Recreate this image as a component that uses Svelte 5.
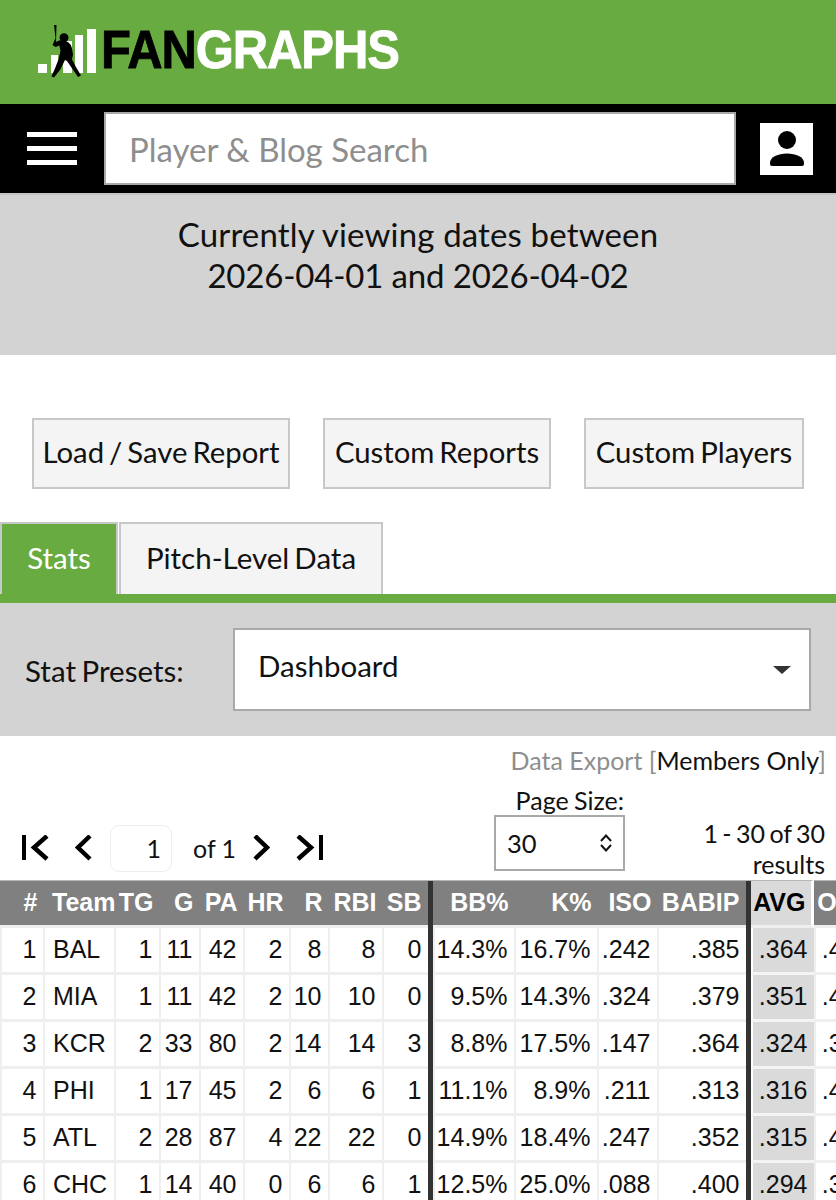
<script>
  const columns = [
    { key: 'n', label: '#', width: 43 },
    { key: 'team', label: 'Team', width: 71, left: true },
    { key: 'tg', label: 'TG', width: 45 },
    { key: 'g', label: 'G', width: 40 },
    { key: 'pa', label: 'PA', width: 44 },
    { key: 'hr', label: 'HR', width: 46 },
    { key: 'r', label: 'R', width: 39 },
    { key: 'rbi', label: 'RBI', width: 54 },
    { key: 'sb', label: 'SB', width: 51, divider: true },
    { key: 'bb', label: 'BB%', width: 81 },
    { key: 'k', label: 'K%', width: 83 },
    { key: 'iso', label: 'ISO', width: 60 },
    { key: 'babip', label: 'BABIP', width: 94, divider: true },
    { key: 'avg', label: 'AVG', width: 63, hl: true },
    { key: 'obp', label: 'OBP', width: 63 },
  ];

  const rows = [
    { n: 1, team: 'BAL', tg: 1, g: 11, pa: 42, hr: 2, r: 8, rbi: 8, sb: 0, bb: '14.3%', k: '16.7%', iso: '.242', babip: '.385', avg: '.364', obp: '.429' },
    { n: 2, team: 'MIA', tg: 1, g: 11, pa: 42, hr: 2, r: 10, rbi: 10, sb: 0, bb: '9.5%', k: '14.3%', iso: '.324', babip: '.379', avg: '.351', obp: '.429' },
    { n: 3, team: 'KCR', tg: 2, g: 33, pa: 80, hr: 2, r: 14, rbi: 14, sb: 3, bb: '8.8%', k: '17.5%', iso: '.147', babip: '.364', avg: '.324', obp: '.388' },
    { n: 4, team: 'PHI', tg: 1, g: 17, pa: 45, hr: 2, r: 6, rbi: 6, sb: 1, bb: '11.1%', k: '8.9%', iso: '.211', babip: '.313', avg: '.316', obp: '.400' },
    { n: 5, team: 'ATL', tg: 2, g: 28, pa: 87, hr: 4, r: 22, rbi: 22, sb: 0, bb: '14.9%', k: '18.4%', iso: '.247', babip: '.352', avg: '.315', obp: '.414' },
    { n: 6, team: 'CHC', tg: 1, g: 14, pa: 40, hr: 0, r: 6, rbi: 6, sb: 1, bb: '12.5%', k: '25.0%', iso: '.088', babip: '.400', avg: '.294', obp: '.375' },
  ];
</script>

<div class="page">
  <header class="brand">
    <a class="logo" href="#top" aria-label="FanGraphs">
      <svg class="mark" viewBox="0 0 60 56" width="60" height="56" aria-hidden="true">
        <g fill="#fff">
          <rect x="0" y="40" width="9" height="9" />
          <rect x="13" y="31" width="7" height="18" />
          <rect x="25" y="17" width="9" height="32" />
          <rect x="37" y="11" width="8" height="38" />
          <rect x="49" y="5" width="9" height="44" />
        </g>
        <path fill="#000" d="M16 1h2.500l-.5 17 3-1.500 1.500 0a4.500 4.500 0 1 1 6 1l2 1q3 2 3.500 6l1 6-1 5q4 8 9 16l-3 1.500-11-16-2-1-5 10-6 7.500-2.500-1q4-9 7-17l2-9q-1-3-1-5l-4 1.500-3-2 3-7z" />
      </svg>
      <span class="wordmark"><b>FAN</b>GRAPHS</span>
    </a>
  </header>

  <div class="searchbar">
    <button class="menu" aria-label="Menu"><span></span><span></span><span></span></button>
    <input class="search" placeholder="Player &amp; Blog Search" />
    <button class="user" aria-label="Account">
      <svg viewBox="0 0 36 36" width="36" height="36" aria-hidden="true">
        <circle cx="18" cy="9" r="9" fill="#000" />
        <path fill="#000" d="M1 33v-1c0-6 8-9.500 17-9.500s17 3.500 17 9.500v1q0 2-2 2H3q-2 0-2-2z" />
      </svg>
    </button>
  </div>

  <div class="dates">
    <p class="line-a">Currently viewing dates between</p>
    <p class="line-b">2026-04-01 and 2026-04-02</p>
  </div>

  <div class="reports">
    <button>Load / Save Report</button>
    <button>Custom Reports</button>
    <button>Custom Players</button>
  </div>

  <div class="tabs">
    <button class="tab active">Stats</button>
    <button class="tab">Pitch-Level Data</button>
  </div>

  <div class="presets">
    <span class="presets-label">Stat Presets:</span>
    <div class="select">
      <span>Dashboard</span>
      <i class="caret"></i>
    </div>
  </div>

  <div class="export"><span class="muted">Data Export [</span>Members Only<span class="muted">]</span></div>

  <div class="pager">
    <div class="nav">
      <svg viewBox="0 0 28 26" width="28" height="26" class="ico first" aria-hidden="true">
        <rect x="0" y="0" width="4" height="25" />
        <path d="M25 1 12 12.500 25 24" />
      </svg>
      <svg viewBox="0 0 18 26" width="18" height="26" class="ico prev" aria-hidden="true">
        <path d="M15 1 3 12.500 15 24" />
      </svg>
      <div class="page-input">1</div>
      <span class="of">of 1</span>
      <svg viewBox="0 0 18 26" width="18" height="26" class="ico next" aria-hidden="true">
        <path d="M3 1 15 12.500 3 24" />
      </svg>
      <svg viewBox="0 0 28 26" width="28" height="26" class="ico last" aria-hidden="true">
        <path d="M3 1 16 12.500 3 24" />
        <rect x="24" y="0" width="4" height="25" />
      </svg>
    </div>
    <div class="size">
      <label for="page-size">Page Size:</label>
      <div class="size-box" id="page-size">
        <span>30</span>
        <svg viewBox="0 0 14 20" width="14" height="20" aria-hidden="true">
          <path d="M2 8 7 2.500 12 8M2 12l5 5.500 5-5.500" />
        </svg>
      </div>
    </div>
    <div class="count">1 - 30 of 30<br />results</div>
  </div>

  <div class="table-wrap">
    <table>
      <colgroup>
        {#each columns as c}
          <col style="width: {c.width}px" />
        {/each}
      </colgroup>
      <thead>
        <tr>
          {#each columns as c}
            <th class:left={c.left} class:divider={c.divider} class:hl={c.hl}>{c.label}</th>
          {/each}
        </tr>
      </thead>
      <tbody>
        {#each rows as row}
          <tr>
            {#each columns as c}
              <td class:left={c.left} class:divider={c.divider} class:hl={c.hl}>{row[c.key]}</td>
            {/each}
          </tr>
        {/each}
      </tbody>
    </table>
  </div>
</div>

<style>
  :global(body) {
    margin: 0;
    background: #fff;
  }

  .page {
    width: 836px;
    height: 1200px;
    overflow: hidden;
    font-family: Lato, "Liberation Sans", sans-serif;
    color: #111;
  }

  button {
    font-family: inherit;
    color: inherit;
  }

  .brand {
    height: 104px;
    background: #68ac41;
    display: flex;
    align-items: flex-start;
  }

  .logo {
    display: flex;
    align-items: flex-start;
    margin: 24px 0 0 38px;
    text-decoration: none;
  }

  .mark {
    display: block;
    flex: none;
  }

  .wordmark {
    margin: 0 0 0 3px;
    font-family: "Liberation Sans", Arial, sans-serif;
    font-weight: 700;
    font-size: 53px;
    line-height: 52px;
    letter-spacing: -1.200px;
    color: #fff;
    -webkit-text-stroke: 0.800px currentColor;
    white-space: nowrap;
    transform: scaleX(0.925);
    transform-origin: left center;
  }

  .wordmark b {
    color: #000;
  }

  .searchbar {
    height: 89px;
    background: #000;
    display: flex;
    align-items: center;
    box-sizing: border-box;
  }

  .menu {
    width: 104px;
    height: 100%;
    background: none;
    border: 0;
    padding: 0 0 0 27px;
    display: flex;
    flex-direction: column;
    justify-content: center;
    gap: 9px;
    flex: none;
  }

  .menu span {
    display: block;
    width: 50px;
    height: 5px;
    background: #fff;
  }

  .search {
    width: 632px;
    height: 73px;
    box-sizing: border-box;
    border: 2px solid #a9a9a9;
    background: #fff;
    padding: 0 23px;
    font-family: inherit;
    font-size: 33px;
    flex: none;
  }

  .search::placeholder {
    color: #8e8e8e;
    opacity: 1;
  }

  .user {
    width: 53px;
    height: 52px;
    margin-left: 24px;
    padding: 0;
    border: 0;
    background: #fff;
    display: flex;
    align-items: center;
    justify-content: center;
    flex: none;
  }

  .dates {
    height: 162px;
    background: #d3d3d3;
    box-sizing: border-box;
    padding-top: 19px;
    text-align: center;
    font-size: 33px;
    line-height: 41px;
    border-top: 2px solid #c4c4c4;
  }

  .dates p {
    margin: 0;
  }

  .line-a { letter-spacing: 0.150px; }
  .line-b { letter-spacing: -0.170px; }

  .reports {
    display: flex;
    padding: 63px 0 0 32px;
    gap: 33px;
    height: 104px;
    box-sizing: content-box;
  }

  .reports button {
    height: 71px;
    padding: 0 0 4px;
    background: #f4f4f4;
    border: 2px solid #c8c8c8;
    font-size: 29.300px;
    word-spacing: -2.500px;
    white-space: nowrap;
  }

  .reports button:nth-child(1) { width: 258px; }
  .reports button:nth-child(2) { width: 228px; }
  .reports button:nth-child(3) { width: 220px; }

  .tabs {
    display: flex;
    height: 72px;
    gap: 1px;
  }

  .tab {
    height: 72px;
    padding: 0 0 4px;
    background: #f4f4f4;
    border: 2px solid #c8c8c8;
    border-bottom: 0;
    font-size: 29.500px;
    word-spacing: -2.500px;
    white-space: nowrap;
  }

  .tab:nth-child(1) { width: 118px; }
  .tab:nth-child(2) { width: 264px; }

  .tab.active {
    background: #68ac41;
    color: #fff;
  }

  .presets {
    height: 142px;
    box-sizing: border-box;
    background: #d3d3d3;
    border-top: 9px solid #68ac41;
    display: flex;
    align-items: center;
    padding: 0 25px;
  }

  .presets-label {
    width: 208px;
    font-size: 29.500px;
    word-spacing: -2px;
    flex: none;
    padding-top: 1px;
  }

  .select {
    width: 578px;
    height: 83px;
    box-sizing: border-box;
    background: #fff;
    border: 2px solid #a9a9a9;
    display: flex;
    align-items: center;
    justify-content: space-between;
    padding: 0 18px 9px 23px;
    font-size: 29.500px;
    flex: none;
  }

  .caret {
    width: 0;
    height: 0;
    border-left: 9px solid transparent;
    border-right: 9px solid transparent;
    border-top: 8px solid #333;
    margin-top: 9px;
  }

  .export {
    height: 49px;
    line-height: 49px;
    text-align: right;
    padding-right: 10px;
    font-size: 25px;
    color: #111;
  }

  .muted {
    color: #8e8e8e;
  }

  .pager {
    height: 95px;
    display: flex;
    font-size: 25px;
  }

  .nav {
    display: flex;
    align-items: center;
    height: 48px;
    margin: 39px 0 0 22px;
    flex: none;
  }

  .ico {
    display: block;
    flex: none;
    fill: none;
    stroke: #000;
    stroke-width: 4.500;
  }

  .ico rect {
    fill: #000;
    stroke: none;
  }

  .prev { margin-left: 25px; }

  .page-input {
    width: 62px;
    height: 47px;
    box-sizing: border-box;
    border: 1px solid #eee;
    border-radius: 9px;
    margin-left: 17px;
    padding-right: 10px;
    text-align: right;
    line-height: 45px;
  }

  .of { margin: 0 0 0 21px; width: 59px; }

  .last { margin-left: 25px; }

  .size {
    width: 131px;
    margin: 0 0 0 171px;
    flex: none;
    text-align: right;
  }

  .size label {
    display: block;
    height: 30px;
    line-height: 30px;
    padding-right: 1px;
    word-spacing: -1px;
  }

  .size-box {
    height: 56px;
    box-sizing: border-box;
    border: 2px solid #a9a9a9;
    display: flex;
    align-items: center;
    justify-content: space-between;
    padding: 0 10px 0 11px;
    font-size: 25.500px;
  }

  .size-box svg {
    fill: none;
    stroke: #111;
    stroke-width: 2;
  }

  .count {
    flex: 1;
    text-align: right;
    padding: 33px 11px 0 0;
    line-height: 31px;
    word-spacing: -2px;
  }

  .table-wrap {
    width: 836px;
    overflow: hidden;
  }

  table {
    table-layout: fixed;
    width: 877px;
    border-collapse: separate;
    border-spacing: 0;
    font-family: "Liberation Sans", Arial, sans-serif;
    font-size: 25px;
  }

  th {
    height: 48px;
    box-sizing: border-box;
    padding: 0 5.500px 2px 0;
    background: #808080;
    color: #fff;
    font-weight: 700;
    text-align: right;
    white-space: nowrap;
    border-top: 1px solid #b5b5b5;
    border-bottom: 3px solid #efefef;
  }

  td {
    height: 47px;
    box-sizing: border-box;
    padding: 0 6.500px 2px 0;
    text-align: right;
    color: #111;
    border-left: 2px solid #efefef;
    border-bottom: 3px solid #efefef;
    white-space: nowrap;
  }

  th.left,
  td.left {
    text-align: left;
    padding-left: 8px;
    padding-right: 0;
  }

  th.left {
    padding-left: 9px;
  }

  /* heavy rule between stat groups, runs through the row borders */
  th.divider,
  td.divider {
    position: relative;
    padding-right: 11.500px;
  }

  th.divider::after,
  td.divider::after {
    content: '';
    position: absolute;
    top: 0;
    right: 0;
    bottom: -3px;
    width: 5px;
    background: #333;
  }

  th.hl {
    background: #dadada;
    color: #000;
    border-right: 3px solid #fff;
  }

  td.hl {
    background: #dadada;
    border-left-color: #fff;
    border-bottom-color: #f4f4f4;
  }
</style>
